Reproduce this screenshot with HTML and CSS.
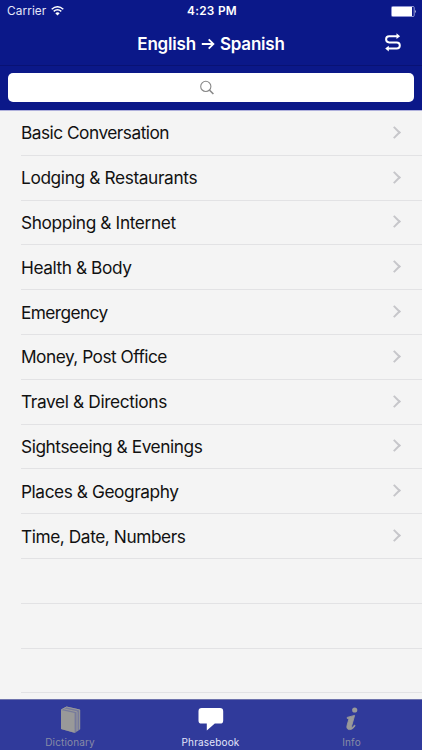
FILE: index.html
```html
<!DOCTYPE html>
<html lang="en">
<head>
<meta charset="utf-8">
<title>Phrasebook</title>
<link rel="stylesheet" href="styles.css">
</head>
<body>
<div class="app">
  <header class="header">
    <div class="status">
      <div class="carrier"><span>Carrier</span>
        <svg class="wifi" width="13" height="10" viewBox="0 0 13 10"><path d="M.7 3.3Q6.5-1.8 12.3 3.3M2.7 5.4Q6.5 2.2 10.3 5.4" fill="none" stroke="#fff" stroke-width="1.45"/><path d="M4.3 7.2Q6.5 5.5 8.7 7.2L6.5 9.5z" fill="#fff"/></svg>
      </div>
      <time class="clock">4:23 PM</time>
      <svg class="battery" width="26" height="11" viewBox="0 0 26 11"><rect x=".5" y=".5" width="22.7" height="10" rx="1" fill="none" stroke="#aeb4e6" stroke-width=".8"/><rect x="1" y="1" width="20" height="9" fill="#fff"/><path d="M24.2 3.7q1.4 1.8 0 3.6z" fill="#fff"/></svg>
    </div>
    <div class="nav">
      <h1 class="title"><span>English</span><svg width="14" height="12" viewBox="0 0 14 12"><path d="M.8 6H12.3M7.7 1.3 12.4 6 7.7 10.7" fill="none" stroke="#fff" stroke-width="1.8"/></svg><span>Spanish</span></h1>
      <svg class="swap" width="18" height="20" viewBox="0 0 18 20"><path d="M13.5 3.2H5.2a3.1 3.1 0 0 0 0 6.2h7.5a3.1 3.1 0 0 1 0 6.2H4" fill="none" stroke="#fff" stroke-width="2"/><path d="M12.5.3 16.1 3.2 12.5 6.1zM4.8 12.7 1.2 15.6 4.8 18.5z" fill="#fff"/></svg>
    </div>
    <div class="searchbar"><div class="field"><svg width="16" height="16" viewBox="0 0 16 16"><circle cx="6.8" cy="6.4" r="5.1" fill="none" stroke="#888" stroke-width="1.1"/><path d="m10.4 10 4 4" stroke="#888" stroke-width="1.6"/></svg></div></div>
  </header>
  <main class="list">
    <div class="row tight"><span>Basic Conversation</span><i class="chevron"></i></div>
    <div class="row loose"><span>Lodging &amp; Restaurants</span><i class="chevron"></i></div>
    <div class="row loose"><span>Shopping &amp; Internet</span><i class="chevron"></i></div>
    <div class="row"><span>Health &amp; Body</span><i class="chevron"></i></div>
    <div class="row tighter"><span>Emergency</span><i class="chevron"></i></div>
    <div class="row tight"><span>Money, Post Office</span><i class="chevron"></i></div>
    <div class="row loose"><span>Travel &amp; Directions</span><i class="chevron"></i></div>
    <div class="row"><span>Sightseeing &amp; Evenings</span><i class="chevron"></i></div>
    <div class="row"><span>Places &amp; Geography</span><i class="chevron"></i></div>
    <div class="row"><span>Time, Date, Numbers</span><i class="chevron"></i></div>
    <div class="row"></div>
    <div class="row"></div>
    <div class="row"></div>
  </main>
  <nav class="tabs">
    <div class="tab"><svg width="28" height="30" viewBox="0 0 28 30"><path d="M5 4.5 10.5 1.5 24 4.5V24.5L19 28 5 24z" fill="#777b9c"/><path d="M5 5 18.6 8V27.8L5 24z" fill="#999"/><path d="M5.3 4.8 10.5 2 23.7 5V24.3M7.7 3.8 21 6.8V26" fill="none" stroke="#999" stroke-width="1"/></svg><span>Dictionary</span></div>
    <div class="tab active"><svg width="28" height="30" viewBox="0 0 28 30"><path d="M4.7 3H23a3.2 3.2 0 0 1 3.2 3.2v9.2a3.2 3.2 0 0 1-3.2 3.2h-5.2L9.8 25.5V18.6H4.7a3.2 3.2 0 0 1-3.2-3.2V6.2A3.2 3.2 0 0 1 4.7 3z" fill="#fff"/></svg><span>Phrasebook</span></div>
    <div class="tab"><svg width="28" height="30" viewBox="0 0 28 30"><circle cx="16.7" cy="5" r="2.6" fill="#999"/><path d="M9.2 12.4 16.6 10.4 13.7 20.8Q13.2 22.8 14.3 22.4 15.2 22 16.4 20.1L17.2 20.7Q14.9 24.6 11.6 24.6 8 24.4 9.1 20.3L10.7 14.7Q11 13.4 9.2 13.4z" fill="#999" stroke="#999" stroke-width=".9" stroke-linejoin="round"/></svg><span>Info</span></div>
  </nav>
</div>
</body>
</html>
```
FILE: styles.css
```css
* { box-sizing: border-box; }
body { margin: 0; font-family: Inter, "Liberation Sans", sans-serif; }
svg { display: block; flex: none; }
.app { width: 422px; height: 750px; display: flex; flex-direction: column; overflow: hidden; background: #f4f4f4; }
.header { height: 110px; flex: none; background: #0b1889; color: #fff; }
.status { height: 22px; display: grid; grid-template-columns: 1fr auto 1fr; align-items: center; padding: 0 5px 0 7px; font-size: 11.8px; line-height: 22px; }
.carrier { display: flex; align-items: center; gap: 5px; letter-spacing: .1px; color: #e4e6f8; }
.clock { font-weight: 600; letter-spacing: .3px; }
.battery { justify-self: end; }
.nav { height: 44px; display: grid; grid-template-columns: 1fr auto 1fr; align-items: center; border-bottom: 1px solid #091274; padding: 0 20px; }
.title { grid-column: 2; margin: 0; display: flex; align-items: center; gap: 5px; font-size: 17px; font-weight: 600; line-height: 22px; letter-spacing: -.2px; }
.swap { justify-self: end; margin-bottom: 2px; }
.searchbar { padding: 7px 8px 0; }
.field { height: 29px; padding-right: 8px; border-radius: 5px; background: #fff; display: flex; align-items: center; justify-content: center; }
.list { height: 589px; flex: none; overflow: hidden; border-top: 1px solid #b0b1dc; }
.row { height: 44.8px; margin-left: 21px; padding: 1px 19px 0 0; border-bottom: 1px solid #e2e2e4; display: flex; align-items: center; justify-content: space-between; color: #111; font-size: 17.3px; line-height: 22px; letter-spacing: -.43px; }
.tight { letter-spacing: -.51px; }
.tighter { letter-spacing: -.6px; }
.loose { letter-spacing: -.37px; }
.chevron { width: 9px; height: 9px; border: solid #c6c6ca; border-width: 2px 2px 0 0; transform: translate(-4px, -1px) rotate(45deg); }
.tabs { height: 51px; flex: none; display: grid; grid-template-columns: 140px 141px 141px; background: #303a9b; border-top: 1px solid #6e73ad; color: #888ba6; }
.tab { display: flex; flex-direction: column; align-items: center; padding-top: 5px; font-size: 10px; line-height: 12px; letter-spacing: .15px; }
.tab span { margin-top: 1px; }
.active { color: #e4e6fa; }
```
